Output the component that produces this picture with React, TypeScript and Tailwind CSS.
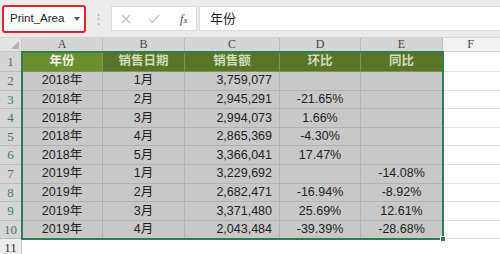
import React from "react";

const cols = [
  { key: "A", w: "w-[81px]" },
  { key: "B", w: "w-[82px]" },
  { key: "C", w: "w-[95px]" },
  { key: "D", w: "w-[81px]" },
  { key: "E", w: "w-[82px]" },
];

const head = ["年份", "销售日期", "销售额", "环比", "同比"];

const rows = [
  ["2018年", "1月", "3,759,077", "", ""],
  ["2018年", "2月", "2,945,291", "-21.65%", ""],
  ["2018年", "3月", "2,994,073", "1.66%", ""],
  ["2018年", "4月", "2,865,369", "-4.30%", ""],
  ["2018年", "5月", "3,366,041", "17.47%", ""],
  ["2019年", "1月", "3,229,692", "", "-14.08%"],
  ["2019年", "2月", "2,682,471", "-16.94%", "-8.92%"],
  ["2019年", "3月", "3,371,480", "25.69%", "12.61%"],
  ["2019年", "4月", "2,043,484", "-39.39%", "-28.68%"],
];

const sans = "font-['Liberation_Sans','Noto_Sans_CJK_SC',sans-serif]";
const serif = "font-['Liberation_Serif','Noto_Sans_CJK_SC',serif]";

function Toolbar() {
  return (
    <div className="h-[38px] bg-[#ebebeb] flex items-center border-b border-[#d4d4d4]">
      <div className="ml-[2px] w-[84px] h-[28px] border-2 border-[#e0262c] rounded-[3px] bg-white flex items-center pl-[6px] pr-[4px] justify-between">
        <span className={`${sans} text-[11.5px] text-[#222]`}>Print_Area</span>
        <span className="w-0 h-0 border-l-[3px] border-r-[3px] border-t-[4px] border-l-transparent border-r-transparent border-t-[#555]" />
      </div>
      <div className="w-[25px] flex justify-center">
        <span className="text-[#b0b0b0] text-[13px] leading-none">⋮</span>
      </div>
      <div className="w-[86px] h-[25px] bg-white border border-[#dadada] flex items-center">
        <span className="w-[29px] flex justify-center">
          <svg width="10" height="10" viewBox="0 0 10 10">
            <path d="M1 1 L9 9 M9 1 L1 9" stroke="#bcbcbc" strokeWidth="1.3" fill="none" />
          </svg>
        </span>
        <span className="w-[29px] flex justify-center">
          <svg width="12" height="10" viewBox="0 0 12 10">
            <path d="M1 5 L4.5 8.5 L11 1" stroke="#c4c4c4" strokeWidth="1.3" fill="none" />
          </svg>
        </span>
        <span className={`${serif} w-[28px] text-center italic text-[12px] text-[#444] pl-[3px]`}>
          f<span className="text-[9px]">x</span>
        </span>
      </div>
      <div className="ml-[2px] flex-1 h-[25px] bg-white border-y border-l border-[#dadada] flex items-center pl-[10px]">
        <span className={`${sans} text-[13px] text-[#222]`}>年份</span>
      </div>
    </div>
  );
}

function ColHeader() {
  return (
    <div className={`h-[14px] flex ${serif} text-[12px] text-[#444] leading-[13px]`}>
      <div className="w-[22px] bg-[#e4e4e4] border-r border-b border-[#c8c8c8] relative">
        <svg className="absolute right-[2px] bottom-[2px]" width="8" height="8" viewBox="0 0 8 8">
          <path d="M8 0 L8 8 L0 8 Z" fill="#b4b4b4" />
        </svg>
      </div>
      {cols.map((c) => (
        <div key={c.key} className={`${c.w} bg-[#d5d5d5] border-r border-[#bcbcbc] text-center`}>
          {c.key}
        </div>
      ))}
      <div className="flex-1 bg-[#f2f2f2] border-b border-[#d4d4d4] text-center pr-[2px]">F</div>
    </div>
  );
}

function Body() {
  return (
    <div className="relative">
      <div className="flex h-[20px]">
        <div className={`w-[22px] bg-[#d5d5d5] border-r border-b border-[#bcbcbc] ${serif} text-[13px] text-[#3d7a5a] flex items-center justify-center`}>
          1
        </div>
        {head.map((h, i) => (
          <div
            key={h}
            className={`${cols[i].w} ${i === 0 ? "bg-[#6b8f2f] text-[#eef4e2]" : "bg-[#587529] text-[#cfdcb8]"} border-r border-b border-[#7d9455] ${sans} font-bold text-[12.5px] flex items-center justify-center`}
          >
            {h}
          </div>
        ))}
        <div className="flex-1 bg-white border-b border-[#e2e2e2]" />
      </div>
      {rows.map((r, ri) => (
        <div key={ri} className="flex h-[18.6px]">
          <div className={`w-[22px] bg-[#d5d5d5] border-r border-b border-[#bcbcbc] ${serif} text-[13px] text-[#3d7a5a] flex items-center justify-center`}>
            {ri + 2}
          </div>
          {r.map((v, ci) => (
            <div
              key={ci}
              className={`${cols[ci].w} bg-[#c8c8c8] border-r border-b border-[#b2b2b2] ${sans} text-[12.5px] text-[#222] flex items-center ${ci === 2 ? "justify-end pr-[7px]" : "justify-center"}`}
            >
              {v}
            </div>
          ))}
          <div className="flex-1 bg-white border-b border-[#e2e2e2]" />
        </div>
      ))}
      <div className="flex h-[16px]">
        <div className={`w-[22px] bg-[#ededed] border-r border-[#c8c8c8] ${serif} text-[13px] text-[#333] flex items-center justify-center`}>
          11
        </div>
        <div className="flex-1 bg-white" />
      </div>
      <div className="absolute left-[21px] top-[-1px] w-[423px] h-[189px] border-2 border-[#2f7d4f] pointer-events-none" />
      <div className="absolute left-[440px] top-[184px] w-[6px] h-[6px] bg-[#2f7d4f] border border-white" />
    </div>
  );
}

export default function App() {
  return (
    <div className="w-[500px] h-[254px] overflow-hidden bg-white">
      <Toolbar />
      <ColHeader />
      <Body />
    </div>
  );
}
